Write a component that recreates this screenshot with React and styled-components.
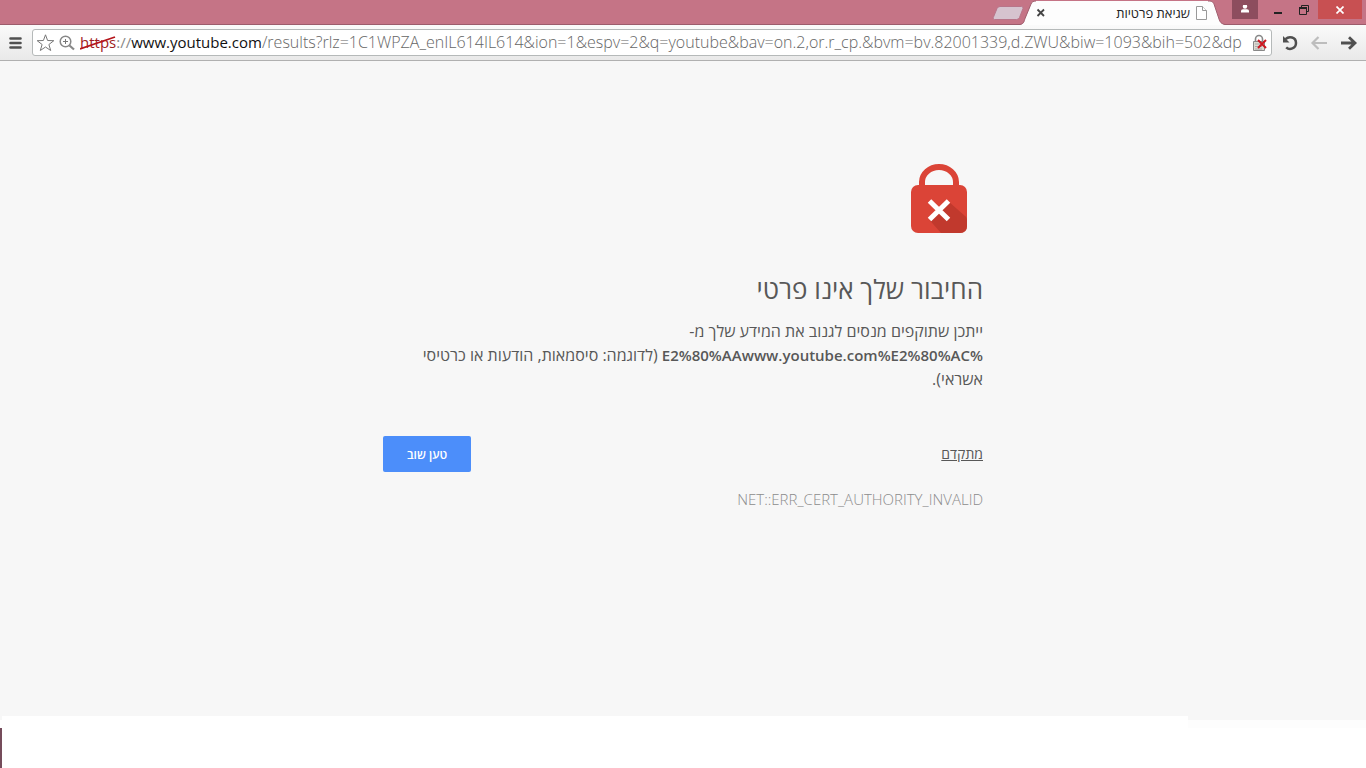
import React from "react"
import styled, { createGlobalStyle } from "styled-components"

const GlobalStyle = createGlobalStyle`
    * {
        box-sizing: border-box;
    }
    body {
        margin: 0;
        background: #f7f7f7;
        font-family: "Open Sans", "Noto Sans", "DejaVu Sans", sans-serif;
    }
    button {
        border: 0;
        padding: 0;
        background: none;
        font-family: inherit;
        cursor: pointer;
    }
    svg {
        display: block;
    }
`

const Window = styled.div`
    display: flex;
    flex-direction: column;
    min-height: 100vh;
`

const TitleBar = styled.header`
    display: flex;
    justify-content: flex-end;
    height: 25px;
    padding-right: 4px;
    background: #c57486;
    border-bottom: 1px solid #9c5c6c;
`

const NewTab = styled.button`
    align-self: flex-start;
    margin: 6px -4px 0 0;
`

const Tab = styled.div`
    display: flex;
    height: 25px;
    margin-right: 7px;
`

const TabBody = styled.div`
    display: flex;
    align-items: center;
    width: 172px;
    height: 24px;
    margin-top: 1px;
    background: #fdfdfd;
`

const TabClose = styled.button`
    margin-right: auto;
`

const TabTitle = styled.span`
    margin-right: 6px;
    font-size: 13px;
    line-height: 16px;
    color: #222;
`

const WindowButtons = styled.div`
    display: flex;
    gap: 8px;
`

const WindowButton = styled.button`
    display: flex;
    align-items: center;
    justify-content: center;
    width: ${props => props.$width}px;
    height: 19px;
    background: ${props => props.$color || "transparent"};
`

const Toolbar = styled.nav`
    display: flex;
    align-items: center;
    height: 36px;
    padding: 0 8px 0 9px;
    gap: 10px;
    background: linear-gradient(#fafafa, #e9e9e9);
    border-bottom: 1px solid #b0b0b0;
`

const AddressBar = styled.form`
    display: flex;
    flex: 1;
    align-items: center;
    min-width: 0;
    height: 27px;
    padding: 0 3px;
    background: #fff;
    border: 1px solid #b5b9b9;
    border-radius: 3px;
`

const Origin = styled.label`
    margin-left: 4px;
    padding-bottom: 2px;
    font-size: 15px;
    line-height: 24px;
    color: #888;
    white-space: pre;
`

const Scheme = styled.span`
    position: relative;
    color: #a01c22;
    svg {
        position: absolute;
        left: 0;
        top: 4px;
    }
`

const Host = styled.span`
    color: #111;
`

const PathInput = styled.input`
    flex: 1;
    min-width: 0;
    height: 26px;
    margin-right: 5px;
    padding: 0 0 2px;
    border: 0;
    outline: 0;
    background: none;
    font-family: inherit;
    font-size: 16px;
    font-weight: 300;
    line-height: 24px;
    color: #666;
`

const NavButtons = styled.div`
    display: flex;
    gap: 12px;
`

const Main = styled.main`
    flex: 1;
    padding: 103px 24px 0;
`

const Interstitial = styled.div`
    max-width: 600px;
    margin: 0 auto;
    color: #585858;
`

const LockIcon = styled.svg`
    margin-right: 16px;
`

const Title = styled.h1`
    margin: 39px 0 14px;
    font-size: 26px;
    font-weight: 400;
    line-height: 32px;
`

const Message = styled.p`
    margin: 0;
    font-size: 16px;
    line-height: 24px;
    strong {
        font-size: 15px;
        font-weight: 600;
    }
`

const Actions = styled.div`
    display: flex;
    align-items: center;
    justify-content: space-between;
    margin-top: 45px;
`

const DetailsLink = styled.a`
    font-size: 14px;
    line-height: 20px;
    color: #585858;
`

const ReloadButton = styled.button`
    height: 36px;
    padding: 0 24px;
    border-radius: 2px;
    background: #4c8efa;
    color: #fff;
    font-size: 12px;
    font-weight: 600;
`

const ErrorCode = styled.p`
    margin: 17px 0 0;
    font-size: 15px;
    font-weight: 300;
    line-height: 20px;
    color: #8c8c8c;
`

const BottomStrip = styled.footer`
    display: flex;
    height: 52px;
`

const Edge = styled.div`
    width: 2px;
    margin-top: 4px;
    border-top: 8px solid #fff;
    background: #754c5b;
`

const Shelf = styled.div`
    flex: 1;
    background: #fff;
`

const ShelfEnd = styled.div`
    width: 13%;
    margin-top: 4px;
    border-top: 8px solid #fdfdfd;
    background: #fff;
`

function WindowControls() {
    return (
        <WindowButtons>
            <WindowButton $width={26} $color="#8d4d5e" aria-label="משתמש">
                <svg width="10" height="10" viewBox="0 1 10 10" fill="#fff">
                    <circle cx="5" cy="2.5" r="2.2" />
                    <path d="M1 8.5V7Q1 5.5 3 5.3h4Q9 5.5 9 7v1.5z" />
                </svg>
            </WindowButton>
            <WindowButton $width={24} aria-label="מזעור">
                <svg width="8" height="10" viewBox="0 0 8 10">
                    <path d="M0 7h8v2H0z" fill="#222" />
                </svg>
            </WindowButton>
            <WindowButton $width={12} aria-label="שחזור">
                <svg width="10" height="10" viewBox="0 0 10 10" fill="none" stroke="#222">
                    <path d="M2.5 2V.5h7v6H8" />
                    <path d="M.5 3h7v6.5h-7z" />
                    <path d="M0 3h8" strokeWidth="2" />
                </svg>
            </WindowButton>
            <WindowButton $width={44} $color="#c85052" aria-label="סגירה">
                <svg width="8" height="8" viewBox="0 0 8 8" stroke="#fff" strokeWidth="1.7">
                    <path d="M.5.5l7 7M7.5.5l-7 7" />
                </svg>
            </WindowButton>
        </WindowButtons>
    )
}

function BrowserTab({ title }) {
    return (
        <Tab>
            <svg width="16" height="25" viewBox="0 0 16 25">
                <path d="M0 25c4-1 4-3 5-6L11 4c1-2 2-3 5-3v24z" fill="#fdfdfd" />
                <path d="M0 24.5c4-1 4-3 5-6L11 4c1-2 2-3 5-3" fill="none" stroke="#a06070" />
            </svg>
            <TabBody>
                <TabClose aria-label="סגור כרטיסייה">
                    <svg width="10" height="10" viewBox="0 0 10 10" stroke="#444" strokeWidth="1.8">
                        <path d="M1.5 1.5l6.5 6.5M8 1.5L1.5 8" />
                    </svg>
                </TabClose>
                <TabTitle dir="rtl">{title}</TabTitle>
                <svg width="12" height="14" viewBox="0 0 12 14" fill="#fff" stroke="#999">
                    <path d="M.5.5h6l4 4v9H.5z" />
                    <path d="M6.5.5v4h4" />
                </svg>
            </TabBody>
            <svg width="17" height="25" viewBox="0 0 17 25">
                <path d="M0 1c4 0 5 1 6 3l5 15c1 3 2 5 6 6H0z" fill="#fdfdfd" />
                <path d="M0 1c4 0 5 1 6 3l5 15c1 3 2 4.5 6 5.5" fill="none" stroke="#a06070" />
            </svg>
        </Tab>
    )
}

function AddressField() {
    return (
        <AddressBar dir="ltr">
            <svg width="19" height="18" viewBox="0 0 19 18" fill="#fff" stroke="#777" strokeLinejoin="round">
                <path d="M9.5 .8l2.1 5.7 6.2.2-4.9 3.8 1.8 6L9.5 13l-5.2 3.5 1.8-6L1.2 6.7l6.2-.2z" />
            </svg>
            <svg width="21" height="16" viewBox="0 0 21 16" fill="none" stroke="#888">
                <circle cx="10.5" cy="6.5" r="5.3" strokeWidth="1.5" />
                <path d="M8 6.5h5M10.5 4v5" stroke="#777" />
                <path d="M14.5 10.5l4.5 4" strokeWidth="2.2" />
            </svg>
            <Origin htmlFor="address">
                <Scheme>
                    https
                    <svg width="36" height="14" viewBox="0 0 36 14" stroke="#b5151c" strokeWidth="1.8">
                        <path d="M0 13L35 1" />
                    </svg>
                </Scheme>
                ://<Host>www.youtube.com</Host>
            </Origin>
            <PathInput
                id="address"
                type="text"
                spellCheck={false}
                defaultValue="/results?rlz=1C1WPZA_enIL614IL614&ion=1&espv=2&q=youtube&bav=on.2,or.r_cp.&bvm=bv.82001339,d.ZWU&biw=1093&bih=502&dp"
            />
            <svg width="16" height="18" viewBox="0 0 16 18">
                <path d="M3.5 8V5a3.5 3.5 0 0 1 7 0v3" fill="none" stroke="#888" strokeWidth="1.6" />
                <path d="M1.5 7.5h11v9h-11z" fill="#ddd9d0" stroke="#888" />
                <path d="M3 10h7M3 12.5h7M3 15h7" stroke="#aaa" />
                <path d="M6 6l8 8M14 6l-8 8" stroke="#cc1720" strokeWidth="2" />
            </svg>
        </AddressBar>
    )
}

export default function App() {
    return (
        <Window>
            <GlobalStyle />
            <TitleBar>
                <NewTab aria-label="כרטיסייה חדשה">
                    <svg width="32" height="14" viewBox="0 0 32 14">
                        <path d="M8 .5h21.5q2 0 1.5 2L27.5 11.5q-.7 2-3 2H2.5q-2 0-1.2-2L5 2.5Q6 .5 8 .5z" fill="#d6c3cf" stroke="#b8758a" />
                    </svg>
                </NewTab>
                <BrowserTab title="שגיאת פרטיות" />
                <WindowControls />
            </TitleBar>
            <Toolbar>
                <button aria-label="תפריט">
                    <svg width="13" height="12" viewBox="0 0 13 12" stroke="#505050" strokeWidth="2.6" strokeLinecap="round">
                        <path d="M1.5 1.5h10M1.5 6h10M1.5 10.5h10" />
                    </svg>
                </button>
                <AddressField />
                <NavButtons>
                    <button aria-label="טען מחדש">
                        <svg width="16" height="16" viewBox="0 0 16 16" fill="none" stroke="#505050" strokeWidth="2.5">
                            <path d="M3.5 4.2C7 .8 14 2 14 8c0 5.5-6.5 7.5-9.8 4.3" />
                            <path d="M1 1v6.5h6.5z" fill="#505050" stroke="none" />
                        </svg>
                    </button>
                    <button aria-label="קדימה">
                        <svg width="18" height="14" viewBox="0 0 18 14" fill="none" stroke="#bdbdbd" strokeWidth="2.2">
                            <path d="M17 7H3M8.5 1L2.5 7l6 6" />
                        </svg>
                    </button>
                    <button aria-label="הקודם">
                        <svg width="18" height="14" viewBox="0 0 18 14" fill="none" stroke="#505050" strokeWidth="2.8">
                            <path d="M1 7h14M9 1.2L15 7l-6 5.8" />
                        </svg>
                    </button>
                </NavButtons>
            </Toolbar>
            <Main dir="rtl" lang="he">
                <Interstitial>
                    <LockIcon width="56" height="70" viewBox="0 0 56 70">
                        <path d="M11 24v-6a17 15 0 0 1 34 0v6" fill="none" stroke="#db4437" strokeWidth="6" />
                        <rect y="21" width="56" height="48" rx="7" fill="#db4437" />
                        <path d="M37.5 37.5L54 52q2 1 2 5v5q0 7-7 7H30L18.5 56z" fill="#c1392d" />
                        <path d="M18.5 37l19 18.5M37.5 37L18.5 55.5" stroke="#fff" strokeWidth="5" />
                    </LockIcon>
                    <Title>החיבור שלך אינו פרטי</Title>
                    <Message>
                        ייתכן שתוקפים מנסים לגנוב את המידע שלך מ-
                        <br />
                        <strong>%E2%80%AAwww.youtube.com%E2%80%AC</strong> (לדוגמה: סיסמאות, הודעות או כרטיסי
                        <br />
                        אשראי).
                    </Message>
                    <Actions>
                        <DetailsLink href="#details">מתקדם</DetailsLink>
                        <ReloadButton>טען שוב</ReloadButton>
                    </Actions>
                    <ErrorCode>NET::ERR_CERT_AUTHORITY_INVALID</ErrorCode>
                </Interstitial>
            </Main>
            <BottomStrip dir="ltr">
                <Edge />
                <Shelf />
                <ShelfEnd />
            </BottomStrip>
        </Window>
    )
}
